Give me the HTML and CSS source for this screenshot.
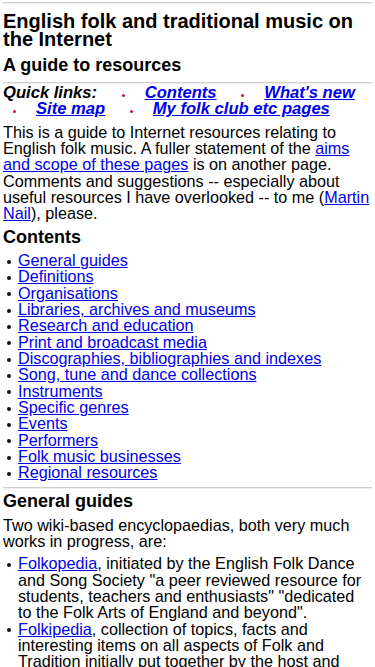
FILE: index.html
```html
<!DOCTYPE html>
<html lang="en">
<head>
<meta charset="utf-8" />
<meta name="viewport" content="width=device-width, initial-scale=1" />
<title>English folk and traditional music on the Internet</title>
<link rel="stylesheet" href="styles.css">
</head>

<body>
<hr class="top" />
<h1>English folk and traditional music on the Internet</h1>
<h2 class="sub">A guide to resources</h2>
<hr class="after_sub" />

<p class="quick"><span class="label">Quick links:</span>
	<span class="ql"><a href="#contents">Contents</a></span>
	<span class="ql"><a href="#new">What's new</a></span>
	<span class="ql"><a href="#map">Site map</a></span>
	<span class="ql"><a href="#club">My folk club etc pages</a></span>
</p>

<p>This is a guide to Internet resources relating to English folk music. A fuller statement of the <a href="#aims">aims and scope of these pages</a> is on another page. Comments and suggestions -- especially about useful resources I have overlooked -- to me (<a href="#mail">Martin Nail</a>), please.</p>

<h2 id="contents">Contents</h2>
<ul>
	<li><a href="#general">General guides</a></li>
	<li><a href="#definitions">Definitions</a></li>
	<li><a href="#organisations">Organisations</a></li>
	<li><a href="#libraries">Libraries, archives and museums</a></li>
	<li><a href="#research">Research and education</a></li>
	<li><a href="#media">Print and broadcast media</a></li>
	<li><a href="#discographies">Discographies, bibliographies and indexes</a></li>
	<li><a href="#collections">Song, tune and dance collections</a></li>
	<li><a href="#instruments">Instruments</a></li>
	<li><a href="#genres">Specific genres</a></li>
	<li><a href="#events">Events</a></li>
	<li><a href="#performers">Performers</a></li>
	<li><a href="#businesses">Folk music businesses</a></li>
	<li><a href="#regional">Regional resources</a></li>
</ul>

<hr />
<h2 id="general" class="after_hr">General guides</h2>
<p>Two wiki-based encyclopaedias, both very much works in progress, are:</p>
<ul>
	<li><a href="#folkopedia">Folkopedia</a>, initiated by the English Folk Dance and Song Society "a peer reviewed resource for students, teachers and enthusiasts" "dedicated to the Folk Arts of England and beyond".</li>
	<li><a href="#folkipedia">Folkipedia</a>, collection of topics, facts and interesting items on all aspects of Folk and Tradition initially put together by the host and contributors of a folk radio programme, open to anyone to add to.</li>
</ul>
</body>
</html>
```

FILE: styles.css
```css
body { margin: 0 3px 20px; background: #fff; color: #000; font: 16.2px/16.33px "Liberation Sans", Arial, Helvetica, sans-serif; }
a { color: #0000ee; text-decoration: underline; }

hr { height: 0; margin: 6px 0 0; border: 0; border-top: 1px solid #cfcfcf; border-bottom: 1px solid #efefef; }
hr.top { margin-top: 2px; }
hr.after_sub { margin-top: 7px; }

h1 { margin: 7.5px 0 0; font-size: 20px; line-height: 18.3px; font-weight: bold; }
h2 { margin: 6px 0 0; font-size: 18px; line-height: 18.4px; font-weight: bold; }
h2.sub { margin-top: 8px; }
h2.after_hr { margin-top: 3.5px; }

p { margin: 6px 0 0; }
ul { margin: 6px 0 0; padding-left: 15px; }
li { list-style: none; }
li:before { content: ""; display: inline-block; width: 4px; height: 4px; margin: 0 7px 0 -11px; background: #111; border-radius: 50%; vertical-align: middle; }

/* quick links bar */
.quick { margin-top: 1.5px; font-size: 16.6px; font-weight: bold; font-style: italic; word-spacing: 10px; }
.quick .label { word-spacing: normal; }
.ql { display: inline-block; margin-left: 10px; word-spacing: normal; }
.ql:before { content: ""; display: inline-block; width: 3px; height: 3px; margin-right: 20px; background: #d4103c; border-radius: 50%; vertical-align: 1px; }
```
